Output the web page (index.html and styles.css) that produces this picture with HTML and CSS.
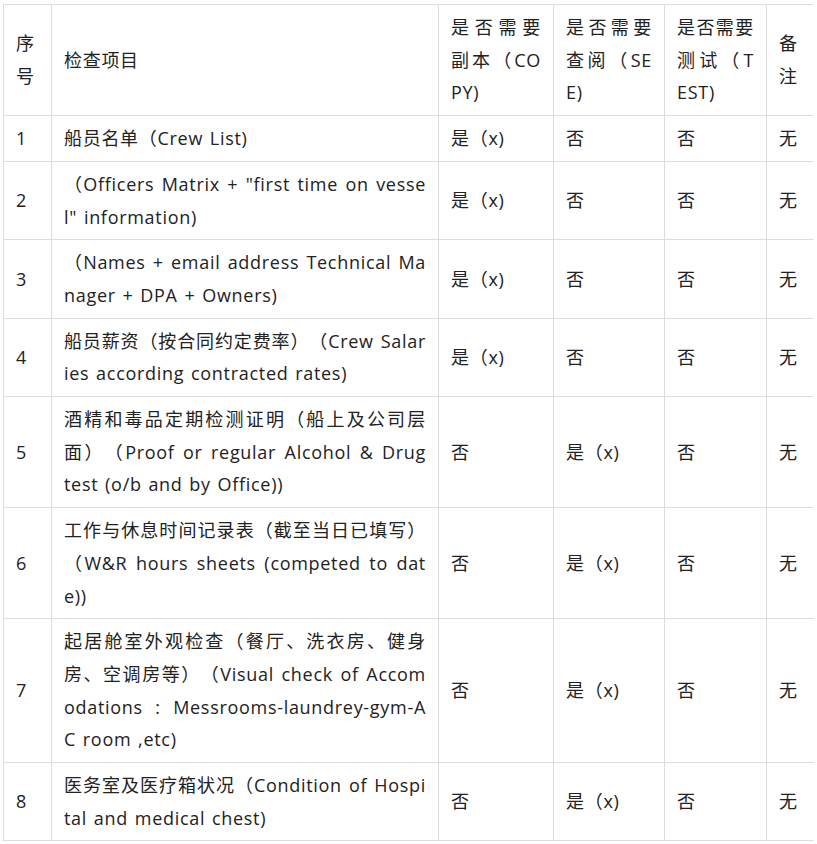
FILE: index.html
```html
<!DOCTYPE html>
<html lang="zh-CN">
<head>
<meta charset="utf-8">
<title>检查项目</title>
<link rel="stylesheet" href="styles.css">
</head>
<body>
<div class="wrap">
<table class="grid">
<colgroup>
<col class="c-no"><col class="c-item"><col class="c-copy"><col class="c-see"><col class="c-test"><col class="c-note">
</colgroup>
<tbody>
<tr><td>序号</td><td>检查项目</td><td>是否需要副本（COPY)</td><td>是否需要查阅（SEE)</td><td>是否需要测试（TEST)</td><td>备注</td></tr>
<tr><td>1</td><td>船员名单（Crew List)</td><td>是（x)</td><td>否</td><td>否</td><td>无</td></tr>
<tr><td>2</td><td>（Officers Matrix + "first time on vessel" information)</td><td>是（x)</td><td>否</td><td>否</td><td>无</td></tr>
<tr><td>3</td><td>（Names + email address Technical Manager + DPA + Owners)</td><td>是（x)</td><td>否</td><td>否</td><td>无</td></tr>
<tr><td>4</td><td>船员薪资（按合同约定费率）（Crew Salaries according contracted rates)</td><td>是（x)</td><td>否</td><td>否</td><td>无</td></tr>
<tr><td>5</td><td>酒精和毒品定期检测证明（船上及公司层面）（Proof or regular Alcohol &amp; Drug test (o/b and by Office))</td><td>否</td><td>是（x)</td><td>否</td><td>无</td></tr>
<tr><td>6</td><td>工作与休息时间记录表（截至当日已填写）（W&amp;R hours sheets (competed to date))</td><td>否</td><td>是（x)</td><td>否</td><td>无</td></tr>
<tr><td>7</td><td>起居舱室外观检查（餐厅、洗衣房、健身房、空调房等）（Visual check of Accomodations : Messrooms-laundrey-gym-AC room ,etc)</td><td>否</td><td>是（x)</td><td>否</td><td>无</td></tr>
<tr><td>8</td><td>医务室及医疗箱状况（Condition of Hospital and medical chest)</td><td>否</td><td>是（x)</td><td>否</td><td>无</td></tr>
</tbody>
</table>
</div>
</body>
</html>
```
FILE: styles.css
```css
html, body {
  margin: 0;
  padding: 0;
  background: #ffffff;
}

.wrap {
  margin: 4px 0 0 3px;
  width: 811px;
  overflow: hidden;
}

.grid {
  border-collapse: collapse;
  table-layout: fixed;
  width: 818px;
  font-family: "Open Sans", "Noto Sans CJK SC", sans-serif;
  font-size: 18px;
  letter-spacing: 0.7px;
  word-spacing: 1.4px;
  line-height: 32.7px;
  color: #222222;
  text-spacing-trim: space-all;
}

.c-no { width: 48px; }
.c-item { width: 387px; }
.c-copy { width: 115px; }
.c-see { width: 111px; }
.c-test { width: 102px; }
.c-note { width: 55px; }

.grid td {
  border: 1px solid #dddddd;
  padding: 6px 12px;
  vertical-align: middle;
  text-align: justify;
  word-break: break-all;
}
```
